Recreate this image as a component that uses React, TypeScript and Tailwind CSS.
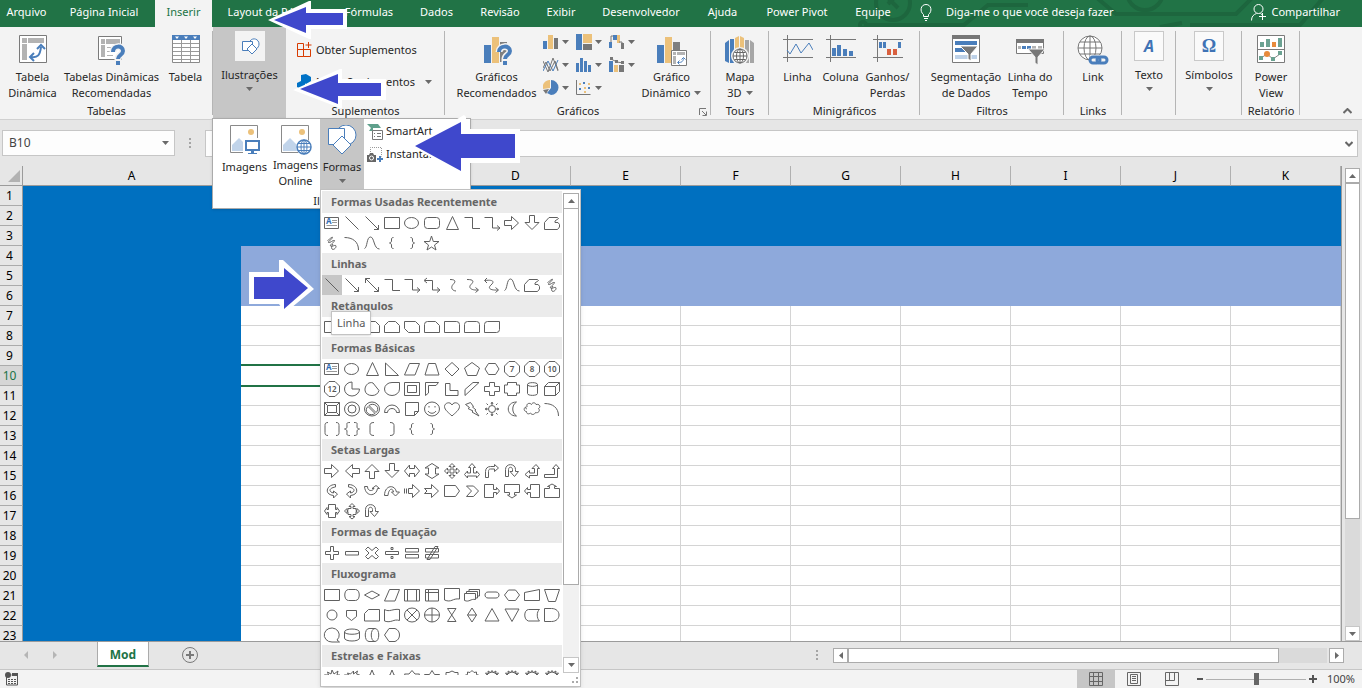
import type { ReactNode } from 'react'

const BLUE = '#4a7ebb'
const GOLD = '#ecc17a'
const GRAY = '#777'

/* ---------- shape gallery ---------- */

// every outline lives in a 20x20 cell
const SHAPES: Record<string, string> = {
  line: 'M3.5 3.5L16.5 16.5',
  lineArrow: 'M3.5 3.5L16.5 16.5M16.5 12v4.5h-4.5',
  lineDouble: 'M3.5 3.5L16.5 16.5M16.5 12v4.5h-4.5M3.5 8v-4.5h4.5',
  rect: 'M2.5 4.5h15v11h-15z',
  ellipse: 'M2.5 10a7 5.5 0 1 0 14 0a7 5.5 0 1 0-14 0z',
  roundRect: 'M5.5 4.5h9a3 3 0 0 1 3 3v5a3 3 0 0 1-3 3h-9a3 3 0 0 1-3-3v-5a3 3 0 0 1 3-3z',
  triangle: 'M10.5 3.5L16.5 16.5H4.5z',
  elbow: 'M2.5 4.5h8v11h7.5',
  elbowArrow: 'M2.5 4.5h8v10.5h7M15 12.5l3 2.5-3 2.5',
  elbowDouble: 'M3 5.5h7.5v9.5h7M15 12.5l3 2.5-3 2.5M5 3l-3 2.5 3 2.5',
  arrowR: 'M2.5 7.5h7v-4l7 6.5-7 6.5v-4h-7z',
  arrowL: 'M17.5 7.5h-7v-4l-7 6.5 7 6.5v-4h7z',
  arrowU: 'M7.5 17.5v-7h-4.5l7-7 7 7h-4.5v7z',
  arrowD: 'M7.5 2.5v7h-4.5l7 7 7-7h-4.5v-7z',
  freeform: 'M2.500 16.500V9.500l4.500-5h8.500l1 1-3.500 2.500v1.500h3l1.500 2v2.500l-2 2.500z',
  scribble: 'M5.500 7.500c2-1 5-4.500 5-3s-5 4-4 5 5-3 6-2-5 4-4 5.500 5-2 5.500 0-3 4.500-4 3 0-4 1-5',
  arc: 'M2.500 4.500c8 0 14 4 14 12.500',
  curve: 'M2.500 15.500c3-1 2-11.500 6-11.500s3 12 9 12',
  curveConn: 'M8 4.500c7 0 5 3 3 5s-2 6 3 6.500',
  curveArrow: 'M5 4.500c7 0 7 2 4 5s0 6 7 5.500M13.500 12.500l3 2.500-3 2.500',
  curveDouble: 'M3 5.500c8-1 10 1 6 4.500s0 5.500 7 5M13.500 12.500l3 2.500-3 2.500M5 3l-2.500 2.500 2.500 2.500',
  braceL: 'M11.500 4.500c-2 0-2 1-2 2.500s0 2.500-2 3c2 .5 2 1.500 2 3s0 2.500 2 2.500',
  braceR: 'M8.500 4.500c2 0 2 1 2 2.500s0 2.500 2 3c-2 .5-2 1.500-2 3s0 2.500-2 2.500',
  star5: 'M9.500 3l1.800 5.500h5.700l-4.500 3.500 1.500 5-4.500-3-4.500 3 1.500-5-4.500-3.500h5.700z',
  snip1: 'M2.500 4.500h11l4 4v7h-15z',
  snip2: 'M6.500 4.500h7l4 4v7h-15v-7z',
  snipDiag: 'M2.500 4.500h11l4 4v7h-11l-4-4z',
  snipRound: 'M5.500 4.500h8l4 4v7h-15v-8a3 3 0 0 1 3-3z',
  round1: 'M2.500 4.500h12a3 3 0 0 1 3 3v8h-15z',
  round2: 'M5.500 4.500h9a3 3 0 0 1 3 3v8h-15v-8a3 3 0 0 1 3-3z',
  roundDiag: 'M5.500 4.500h12v8a3 3 0 0 1-3 3h-12v-8a3 3 0 0 1 3-3z',
  rtTriangle: 'M3.500 4v12.500h13z',
  parallelogram: 'M7.500 4.500h10l-4.500 11.500h-10.500z',
  trapezoid: 'M6.500 4.500h7l3.500 11.500h-14z',
  diamond: 'M10 3.500l7 6.500-7 7-7-7z',
  pentagon: 'M10 3.500l7.500 5.500-3 7.500h-9l-3-7.500z',
  hexagon: 'M6.500 4.500h7l3.500 5.500-3.500 5.500h-7l-3.500-5.500z',
  octagon: 'M7 2.500h6l4.500 4.500v6l-4.500 4.500h-6l-4.500-4.500v-6z',
  pie: 'M10 3a7.500 7 0 1 0 7.500 7h-7.500z',
  chord: 'M6 4.500c-5 4-4 12 4 12c4 0 6-2 7-5l-6-7.500c-2-1-4 0-5 .5z',
  teardrop: 'M17.500 3.500v6.500a7.500 6.500 0 1 1-7.500-6.500z',
  frame: 'M2.500 3.500h15v13h-15zM5.500 6.500h9v7h-9z',
  halfFrame: 'M3.500 3.500h13l-2.500 3h-7.500v7.500l-3 2.500z',
  corner: 'M3.500 4.500h4.500v7h8v5h-12.500z',
  stripe: 'M11 3.500h6l-14 13v-6z',
  cross: 'M7.500 3.500h5v4h5v5h-5v4h-5v-4h-5v-5h5z',
  plaque: 'M5.500 3.500h9v2.500h3v8h-3v2.500h-9v-2.500h-3v-8h3z',
  can: 'M5.500 5.500c0-2.500 10-2.500 10 0v9c0 2.500-10 2.500-10 0zM5.500 5.500c0 2.500 10 2.500 10 0',
  cube: 'M2.500 7.500l4-4h11v9l-4 4h-11zM2.500 7.500h11v9M13.500 7.500l4-4',
  bevel: 'M2.500 3.500h15v13h-15zM5.500 6.500h9v7h-9zM2.500 3.500l3 3M17.500 3.500l-3 3M2.500 16.500l3-3M17.500 16.500l-3-3',
  donut: 'M2.500 10a7.500 7 0 1 0 15 0a7.500 7 0 1 0-15 0zM6 10a4 4 0 1 0 8 0a4 4 0 1 0-8 0z',
  noSymbol: 'M2.500 10a7.500 7 0 1 0 15 0a7.500 7 0 1 0-15 0zM7 6.500a5 4.500 0 0 1 7 7zM6 7.500a5 4.500 0 0 0 7 7z',
  blockArc: 'M2.500 13.500a7.500 7.500 0 0 1 15 0h-3a4.500 4 0 0 0-9 0z',
  folded: 'M3.500 3.500h13v9l-4 4h-9zM16.500 12.500h-4v4',
  smiley: 'M2.500 10a7.500 7 0 1 0 15 0a7.500 7 0 1 0-15 0zM7 7v1.500M13 7v1.500M6 12c2 3 6 3 8 0',
  heart: 'M10 17c-3-3-7.500-6-7.500-9.500s5.500-5.500 7.500-1.500c2-4 7.500-2 7.500 1.500s-4.500 6.500-7.500 9.500z',
  bolt: 'M3.500 5.500l5-2 3 4-1 .5 3.500 3-1 .5 4 5.500-7-4 1-1-5-2.500 1.500-1z',
  sun: 'M6.500 10a3.500 3.500 0 1 0 7 0a3.500 3.500 0 1 0-7 0zM9 5l1-2 1 2zM9 15l1 2 1-2zM5 9l-2 1 2 1zM15 9l2 1-2 1zM4.500 4.500l1.500 1.500M15.500 4.500l-1.500 1.500M4.500 15.500l1.500-1.500M15.500 15.500l-1.500-1.500',
  moon: 'M14.500 3c-11 0-11 14 0 14c-5-3-5-11 0-14z',
  cloud: 'M5 8c-1-4 3-4.500 4.500-2.500c1-2.500 4-2 4.500 0c4-1 5 3 2.500 4c2 2 0 5-3 4c-1 2.500-4 2.500-5 .5c-2 1.500-4 1-4-1.500c-3 0-3-4-.5-4.500c-.5 1 0 2 1 2',
  bracketPair: 'M6 3.500c-2.500 0-3 1-3 3v7c0 2 .5 3 3 3M14 3.500c2.500 0 3 1 3 3v7c0 2-.5 3-3 3',
  bracePair: 'M8 3.500c-4 0-3 1-3 3.500s-.5 2.500-2.500 3c2 .5 2.500 1 2.500 3s-1 3.500 3 3.500M12 3.500c4 0 3 1 3 3.500s.5 2.500 2.500 3c-2 .5-2.500 1-2.500 3s1 3.500-3 3.500',
  bracketL: 'M12 3.500c-3 0-4 1-4 3v7c0 2 1 3 4 3',
  bracketR: 'M8 3.500c3 0 4 1 4 3v7c0 2-1 3-4 3',
  leftRight: 'M2.500 10l5-6v3.500h5v-3.500l5 6-5 6v-3.500h-5v3.500z',
  upDown: 'M10 2.500l7 4.500h-3.500v6h3.500l-7 4.500-7-4.500h3.500v-6h-3.500z',
  quad: 'M10 2.500l3 3h-2v3.500h3.500v-2l3 3-3 3v-2h-3.500v3.500h2l-3 3-3-3h2v-3.500h-3.500v2l-3-3 3-3v2h3.500v-3.500h-2z',
  triArrow: 'M10 2.500l3.500 4h-2v5.500h3v-2l3 3.500-3 3.500v-2h-9v2l-3-3.500 3-3.500v2h3v-5.500h-2z',
  bent: 'M3.500 16.500v-6c0-3 2-5 5-5h4v-2l4 3.500-4 3.500v-2.500h-4c-1.500 0-2 1-2 2.500v6z',
  uturn: 'M3.500 15.500v-7c0-6.500 10-6.500 10 0v2h3l-4 5-4.500-5h2.500v-2c0-3-4-3-4 0v7z',
  leftUp: 'M14 3.500l3.500 4h-2v7h-8v2.500l-4.500-3.500 4.500-4v2.500h5v-4.500h-2.500z',
  bentUp: 'M14 3.500l3.500 4h-2v9h-13v-3h10v-6h-2z',
  curvedR: 'M13.500 3.500c-9 0-12 10-2 11v2.500l4-4-4-3v2c-5-1-5-5 2-6z',
  curvedL: 'M6.500 3.500c9 0 12 10 2 11v2.500l-4-4 4-3v2c5-1 5-5-2-6z',
  curvedU: 'M2.500 5.500h3c0 5 5 5 6.500 2h-2l4-3 3.500 3h-2c-1 8-12 9-13-2z',
  curvedD: 'M2.500 14.500c0-10 10-12 12-3.500h3l-4 4-4-4h2c-1-5-5-3-5.500 3.500z',
  striped: 'M2.500 7.500v5M4.500 7.500v5M6.500 7.500h4v-4l7 6.500-7 6.500v-4h-4z',
  notched: 'M2.500 7.500h7v-4l7 6.500-7 6.500v-4h-7l2.500-2.500z',
  homePlate: 'M2.500 4.500h11l4 5.500-4 5.500h-11z',
  chevron: 'M4.500 5h7l5 5-5 5.500h-7l5-5.500z',
  rightCall: 'M2.500 3.500h9v5h3v-2l3 3.500-3 3.500v-2h-3v5h-9z',
  downCall: 'M2.500 3.500h15v8h-5v2.500h2l-4.500 3-4.500-3h2v-2.500h-5z',
  leftCall: 'M17.500 3.500h-9v5h-3v-2l-3 3.500 3 3.500v-2h3v5h9z',
  upCall: 'M2.500 16.500h15v-9h-5v-2h2l-4.500-2.500-4.500 2.500h2v2h-5z',
  lrCall: 'M6.500 3.500h7v5h1.500v-2l2.500 3.500-2.500 3.500v-2h-1.500v5h-7v-5h-1.500v2l-2.500-3.500 2.500-3.500v2h1.500z',
  quadCall: 'M10 2.500l3 3h-2v2h3v2h1v-2l2.500 2.500-2.500 2.500v-2h-1v3h-3v2h2l-3 2.500-3-2.500h2v-2h-3v-3h-1v2l-2.500-2.500 2.500-2.500v2h1v-2h3v-2h-2z',
  plus: 'M8.500 3.500h3v5h5v3h-5v5h-3v-5h-5v-3h5z',
  minus: 'M3.500 8.500h13v3.500h-13z',
  multiply: 'M6 4l4 3.500 4-3.500 2.500 2.500-3.500 3.500 3.500 3.500-2.500 2.500-4-3.500-4 3.500-2.500-2.500 3.500-3.500-3.500-3.500z',
  divide: 'M3.500 8.500h13v3h-13zM9 4.500h2v2h-2zM9 13.500h2v2h-2z',
  equal: 'M3.500 5.500h13v3.500h-13zM3.500 11.500h13v3.500h-13z',
  notEqual: 'M3.500 5.500h13v3.500h-13zM3.500 11.500h13v3.500h-13zM5 16.500l8-13h3l-8 13z',
  flatDiamond: 'M10 6l7.500 4-7.500 4-7.500-4z',
  altProcess: 'M6.500 4.500h7c5 0 5 11 0 11h-7c-5 0-5-11 0-11z',
  predefined: 'M2.500 4.500h15v11.500h-15zM5.500 4.500v11.500M14.500 4.500v11.500',
  internal: 'M3.500 4.500h13v11.500h-13zM6.500 4.500v11.500M3.500 7.500h13',
  document: 'M2.500 3.500h15v10.500c-7-1-8 4-15 1z',
  multiDoc: 'M2.500 8.500h11v6c-5-1-6 3-11 1zM4.500 8.500v-2h11v6.500h-2M7 6.500v-2h10.500v6.500h-2',
  terminator: 'M6 7h8c4 0 4 6 0 6h-8c-4 0-4-6 0-6z',
  prep: 'M6.500 5h7l4 5-4 5.500h-7l-4-5.500z',
  manualInput: 'M2.500 7.500l15-3v11h-15z',
  manualOp: 'M2.500 4.500h15l-4 12h-7z',
  circle: 'M5 10a5 5 0 1 0 10 0a5 5 0 1 0-10 0z',
  offPage: 'M4.500 5.500h10v6l-5 4-5-4z',
  card: 'M6.500 4.500h11v11.500h-15v-7.500z',
  tape: 'M2.500 4.500c5 3 8-1 15 0v11c-6-2-8 3-15 .5z',
  sumJunction: 'M2.500 10a7.500 7 0 1 0 15 0a7.500 7 0 1 0-15 0zM5 5l10 10M15 5l-10 10',
  or: 'M2.500 10a7.500 7 0 1 0 15 0a7.500 7 0 1 0-15 0zM10 3v14M2.500 10h15',
  collate: 'M5.500 3.500h8.500l-8.500 13h8.500z',
  sort: 'M10 3l4.500 7-4.500 7-4.500-7zM5.500 10h9',
  extract: 'M10 3.500l7 12.500h-14z',
  merge: 'M3 4h14l-7 12.500z',
  stored: 'M6.500 4.500h11c-3 2-3 9 0 11.500h-11c-5-1-5-11 0-11.500z',
  delay: 'M2.500 3.500h7c10 0 10 13 0 13h-7z',
  sequential: 'M10 17a7.500 7 0 1 1 5-2l2.500 2h-7.500z',
  disk: 'M2.500 7c0-4 15-4 15 0v6c0 4-15 4-15 0zM2.500 7c0 3 15 3 15 0',
  direct: 'M7 3.500h6c5 0 5 13 0 13h-6c-5 0-5-13 0-13M13 3.500c-5 0-5 13 0 13',
  display: 'M7 3.500h6c6 2 6 11 0 13h-6l-4.500-6.500z',
  burst1: 'M2.500 8h4l-1-3 3.500 2 1-4 2 4 4-3-1 4h3l-4 4z',
  burst2: 'M2.500 8h4l-1-2 3 1 3-3 0 3 4-3-1 3 3 1-6 4z',
  star4: 'M10 3l2 5 5 2-5 2-2 5-2-5-5-2 5-2z',
  star6: 'M10 3.500l3 3.500h4.500l-2 3.500 2 3.500h-5l-2.500 3.500-2.500-3.500h-5l2-3.500-2-3.500h4.500z',
  starFive: 'M10 3.500l2.500 4h5l-4 3 1.500 5-5-3-5 3 1.500-5-4-3h5z',
  star8: 'M4 8v-2.500h3l3-1.500 3 1.500h3v2.500l1.500 2h-15z',
  star10: 'M2.500 8.500l3-1v-2.500l2.500.5 2-2 2 2 2.500-.5v2.500l3 1-2 3h-11z',
  starMany: 'M2.500 9l2.500-1-1.500-2 3 .5-.5-2.500 2.500 1.500 1.500-2 1.500 2 2.500-1.500-.5 2.500 3-.5-1.500 2 2.500 1-2 2h-11zM5 8l2-2 3-1 3 1 2 2',
}

// these carry their side count inside
const SIDES: Record<string, string> = { sides7: '7', sides8: '8', sides10: '10', sides12: '12' }

const SECTIONS: { title: string; rows: string[] }[] = [
  {
    title: 'Formas Usadas Recentemente',
    rows: [
      'textBox line lineArrow rect ellipse roundRect triangle elbow elbowArrow arrowR arrowD freeform',
      'scribble arc curve braceL braceR star5',
    ],
  },
  {
    title: 'Linhas',
    rows: ['line lineArrow lineDouble elbow elbowArrow elbowDouble curveConn curveArrow curveDouble curve freeform scribble'],
  },
  { title: 'Retângulos', rows: ['rect roundRect snip1 snip2 snipDiag snipRound round1 round2 roundDiag'] },
  {
    title: 'Formas Básicas',
    rows: [
      'textBox ellipse triangle rtTriangle parallelogram trapezoid diamond pentagon hexagon sides7 sides8 sides10',
      'sides12 pie chord teardrop frame halfFrame corner stripe cross plaque can cube',
      'bevel donut noSymbol blockArc folded smiley heart bolt sun moon cloud arc',
      'bracketPair bracePair bracketL bracketR braceL braceR',
    ],
  },
  {
    title: 'Setas Largas',
    rows: [
      'arrowR arrowL arrowU arrowD leftRight upDown quad triArrow bent uturn leftUp bentUp',
      'curvedR curvedL curvedU curvedD striped notched homePlate chevron rightCall downCall leftCall upCall',
      'lrCall quadCall uturn',
    ],
  },
  { title: 'Formas de Equação', rows: ['plus minus multiply divide equal notEqual'] },
  {
    title: 'Fluxograma',
    rows: [
      'rect altProcess flatDiamond parallelogram predefined internal document multiDoc terminator prep manualInput manualOp',
      'circle offPage card tape sumJunction or collate sort extract merge stored delay',
      'sequential disk direct display',
    ],
  },
  {
    title: 'Estrelas e Faixas',
    rows: ['burst1 burst2 star4 star4 star6 starFive star8 star10 starMany starMany starMany starMany'],
  },
]

function Shape({ name }: { name: string }) {
  if (name === 'textBox') {
    return (
      <svg viewBox="0 0 20 20" className="size-5" fill="none" stroke="#666">
        <path d="M2.500 4.500h14v11h-14z" />
        <path d="M10 7.500h5M10 9.500h5M4.500 12.500h10.500" stroke="#999" />
        <text x="4" y="11" fontSize="8" fontWeight="700" fill="#2f6db5" stroke="none">A</text>
      </svg>
    )
  }
  const sides = SIDES[name]
  return (
    <svg viewBox="0 0 20 20" className="size-5" fill="none" stroke="#606060">
      <path d={sides ? SHAPES.octagon : SHAPES[name]} />
      {sides && (
        <text x="10" y="13" fontSize="8" fontWeight="600" textAnchor="middle" fill="#555" stroke="none">
          {sides}
        </text>
      )}
    </svg>
  )
}

function Caret({ up = false }: { up?: boolean }) {
  return (
    <svg viewBox="0 0 7 4" className="w-[7px] h-1 shrink-0" fill="#6a6a6a">
      <path d={up ? 'M0 4h7L3.500 0z' : 'M0 0h7L3.500 4z'} />
    </svg>
  )
}

function ShapeGallery() {
  return (
    <div className="absolute left-0 top-full z-30 w-[261px] h-[498px] bg-white border border-[#c0c0c0] shadow-md flex flex-col p-px">
      <div className="flex h-[484px]">
        <div className="w-60 overflow-hidden">
          {SECTIONS.map(s => (
            <section key={s.title}>
              <h3 className="h-[22px] pl-[9px] bg-[#ebebeb] text-[#666] font-bold leading-[22px]">{s.title}</h3>
              {s.rows.map((row, r) => (
                <div key={r} className="flex h-5">
                  {row.split(' ').map((name, i) => (
                    <button
                      key={i}
                      aria-label={name}
                      className={s.title === 'Linhas' && i === 0 ? 'size-5 bg-[#c6c6c6]' : 'size-5'}
                    >
                      <Shape name={name} />
                    </button>
                  ))}
                </div>
              ))}
            </section>
          ))}
        </div>
        {/* gallery scrollbar */}
        <div className="ml-px mt-0.5 w-4 flex flex-col h-[480px] bg-[#f1f1f1]">
          <button aria-label="Rolar para cima" className="h-4 shrink-0 bg-white border border-[#ababab] flex items-center justify-center">
            <Caret up />
          </button>
          <div className="h-[376px] bg-white border border-t-0 border-[#ababab]" />
          <div className="flex-1" />
          <button aria-label="Rolar para baixo" className="h-4 shrink-0 bg-white border border-[#c6c6c6] flex items-center justify-center">
            <Caret />
          </button>
        </div>
      </div>
      <svg viewBox="0 0 8 8" className="size-2 self-end mt-0.5" fill="#aaa">
        <path d="M5 0h2v2H5zM1 4h2v2H1zM5 4h2v2H5z" />
      </svg>
      <div className="absolute left-[10px] top-[121px] h-6 px-[5px] bg-white border border-[#c3c3c3] shadow text-[#575757] leading-[22px]">
        Linha
      </div>
    </div>
  )
}

/* ---------- ribbon icons ---------- */

function Icon({ w = 32, h = 32, children }: { w?: number; h?: number; children: ReactNode }) {
  return (
    <svg width={w} height={h} viewBox={`0 0 ${w} ${h}`} fill="none" className="shrink-0">
      {children}
    </svg>
  )
}

const PivotIcon = (
  <Icon>
    <path d="M2.500 .5h27v27h-27z" fill="#fff" stroke="#7a7a7a" />
    <path d="M5 3h5v5h-5zM11 3h16v5h-16zM5 9h5v16h-5z" fill="#b3b3b3" />
    <path d="M14 22c7 1 9-2 10-10" stroke={BLUE} strokeWidth="2" />
    <path d="M20 14l4-4 4 4M17 18l-4 4 4 4" stroke={BLUE} strokeWidth="2" />
  </Icon>
)
const PivotHelpIcon = (
  <Icon>
    <path d="M2.500 1.500h23v23h-23z" fill="#fff" stroke="#7a7a7a" />
    <path d="M5 4h4v5h-4zM10 4h14v5h-14zM5 10h4v12h-4z" fill="#b3b3b3" />
    <path d="M11 12.500h8M11 16.500h6M11 20.500h6" stroke="#b3b3b3" />
    <path d="M17 17c0-7 10-7 10-1c0 4-5 4-5 8v4" stroke="#f3f3f3" strokeWidth="7" />
    <path d="M17 17c0-7 10-7 10-1c0 4-5 4-5 8" stroke={BLUE} strokeWidth="4" />
    <path d="M20 26h4v4h-4z" fill={BLUE} />
  </Icon>
)
const TableIcon = (
  <Icon>
    <path d="M2.500 4.500h27v23h-27z" fill="#fff" stroke="#8a8a8a" />
    <path d="M2 0h28v5h-28z" fill={BLUE} />
    <path d="M5 1.500h4l-2 2.500zM14 1.500h4l-2 2.500zM23 1.500h4l-2 2.500z" fill="#fff" />
    <path d="M11.500 5v22M20.500 5v22M3 8.500h26M3 12.500h26M3 16.500h26M3 20.500h26M3 24.500h26" stroke="#9a9a9a" />
  </Icon>
)
const ShapesIcon = (
  <Icon w={20} h={20}>
    <path d="M10 5c3-4 9-2 9 3c0 2-1 4-3 5" stroke={BLUE} fill="#fff" />
    <path d="M2.500 5.500h10v9h-10z" stroke={BLUE} fill="#fff" />
    <path d="M12 8l5 5-5 5-5-5z" stroke={BLUE} fill="#fff" />
  </Icon>
)
const ChartHelpIcon = (
  <Icon>
    <path d="M3 10h7v18H3z" fill={BLUE} />
    <path d="M11 2h7v26h-7z" fill={GOLD} />
    <path d="M19 7h7v20h-7z" fill="#7f7f7f" />
    <path d="M18 17c0-7 11-7 11-1c0 4-5 4-5 8v4" stroke="#f3f3f3" strokeWidth="7" />
    <path d="M18 17c0-7 11-7 11-1c0 4-5 4-5 8" stroke={BLUE} strokeWidth="4" />
    <path d="M22 26h4v4h-4z" fill={BLUE} />
  </Icon>
)
const PivotChartIcon = (
  <Icon>
    <path d="M1 10h7v18H1z" fill={BLUE} />
    <path d="M9 2h7v26h-7z" fill={GOLD} />
    <path d="M17 7h7v10h-7z" fill="#7f7f7f" />
    <path d="M15.500 15.500h15v15h-15z" fill="#fff" stroke="#7a7a7a" />
    <path d="M17 17h3v3h-3zM21 17h8v3h-8zM17 21h3v8h-3z" fill="#b3b3b3" />
    <path d="M22 27.500c4 0 5-1 5.500-4M25.500 24.500l2-2 2 2M23.500 25.500l-2 2 2 2" stroke={BLUE} />
  </Icon>
)
const MapIcon = (
  <Icon>
    <path d="M1 8l4-3v23l-4-2zM6 4h4v24H6z" fill={BLUE} />
    <path d="M11 3l4-2v15h-4zM16 1l4 2v13h-4z" fill={GOLD} />
    <path d="M21 5h4v23h-4zM26 5l4 3v20h-4z" fill="#a6a6a6" />
    <circle cx="16" cy="21" r="9" fill="#f3f3f3" />
    <circle cx="16" cy="21" r="7" fill="#fff" stroke="#666" />
    <path d="M16 14v14M9 21h14M10.500 17.500h11M10.500 24.500h11" stroke="#666" />
    <ellipse cx="16" cy="21" rx="3.500" ry="7" stroke="#666" />
  </Icon>
)
const SPARK_AXIS = 'M0 4.500h30M0 22.500h30M4.500 0v27'
const SparkLineIcon = (
  <Icon w={30}>
    <path d={SPARK_AXIS} stroke={GRAY} />
    <path d="M4 15l3 4 6-10 5 9 8-10 4 7" stroke={BLUE} />
  </Icon>
)
const SparkColIcon = (
  <Icon w={30}>
    <path d={SPARK_AXIS} stroke={GRAY} />
    <path d="M6 13h4v8H6zM11 10h4v11h-4zM17 14h4v7h-4zM23 16h4v5h-4z" fill={BLUE} />
  </Icon>
)
const SparkWinIcon = (
  <Icon w={30}>
    <path d={SPARK_AXIS} stroke={GRAY} />
    <path d="M6 7h3v6H6zM10 7h3v6h-3zM25 7h3v6h-3z" fill={BLUE} />
    <path d="M14 14h4v6h-4zM20 14h4v6h-4z" fill="#d9603f" />
  </Icon>
)
const SlicerIcon = (
  <Icon>
    <path d="M2.500 .5h27v27h-27z" fill="#fff" stroke="#7a7a7a" />
    <path d="M2 0h28v4h-28z" fill={GRAY} />
    <path d="M5 6h22v4H5zM5 13h12v4H5z" fill={BLUE} />
    <path d="M5 20h22v4H5z" fill="#bdd1e8" />
    <path d="M10 11h18l-7 8v7l-3-2v-5z" fill={GRAY} stroke="#fff" />
  </Icon>
)
const TimelineIcon = (
  <Icon>
    <path d="M2.500 4.500h27v14h-27z" fill="#fff" stroke="#7a7a7a" />
    <path d="M2 4h28v4h-28z" fill={GRAY} />
    <path d="M4 11h3v3H4zM18 11h4v3h-4zM24 11h4v3h-4z" fill="#b3b3b3" />
    <path d="M8 11h4v3H8zM13 11h4v3h-4z" fill={BLUE} />
    <path d="M14 14h17l-7 8v8l-3-2v-6z" fill={GRAY} stroke="#f3f3f3" />
  </Icon>
)
const LinkIcon = (
  <Icon>
    <circle cx="13" cy="13" r="12" fill="#fff" stroke={GRAY} />
    <ellipse cx="13" cy="13" rx="6" ry="12" stroke={GRAY} />
    <path d="M13 1v24M1 13h24M3 7h20M3 19h20" stroke={GRAY} />
    <path d="M13 20h19v10h-20z" fill="#f3f3f3" />
    <rect x="13" y="22" width="10" height="6" rx="3" stroke={BLUE} strokeWidth="3" />
    <rect x="20" y="22" width="10" height="6" rx="3" stroke={BLUE} strokeWidth="3" />
  </Icon>
)
const PowerViewIcon = (
  <Icon>
    <path d="M2.500 .5h27v27h-27zM2.500 14.500h27" fill="#fff" stroke="#7a7a7a" />
    <path d="M5 7h4v5H5zM11 4h4v8h-4zM23 3h4v9h-4z" fill="#6ba292" />
    <path d="M17 7h4v5h-4z" fill="#e88b3c" />
    <path d="M6 23l6-4 6 5 7-5" stroke="#888" />
    <path d="M4 21h4v4H4zM16 22h4v4h-4zM23 16h4v4h-4z" fill="#6ba292" />
    <circle cx="12" cy="19" r="3" fill="#e88b3c" />
  </Icon>
)

const CHART_ICONS: { label: string; icon: ReactNode }[] = [
  {
    label: 'Colunas',
    icon: <><path d="M0 7h4v8H0z" fill={BLUE} /><path d="M5 1h5v14H5z" fill={GOLD} /><path d="M11 4h4v11h-4z" fill={GRAY} /></>,
  },
  {
    label: 'Hierarquia',
    icon: <><path d="M0 0h6v16H0z" fill={BLUE} /><path d="M7 0h9v9H7z" fill={GOLD} /><path d="M7 10h9v6H7z" fill={GRAY} /></>,
  },
  {
    label: 'Cascata',
    icon: <><path d="M0 8h3v6H0zM4 1h4v5H4z" fill={BLUE} /><path d="M8 1h3v8H8z" fill={GOLD} /><path d="M12 9h3v6h-3z" fill={GRAY} /><path d="M2 8v-6h2M10 8h3v2" stroke={GRAY} /></>,
  },
  {
    label: 'Linhas',
    icon: <><path d="M0 4l5 11 5-14 5 13" stroke={GRAY} /><path d="M0 14l5-10 5 10 5-11" stroke={BLUE} /><path d="M0 11l3-6 4 9 5-10 3 9" stroke={GRAY} /></>,
  },
  {
    label: 'Estatístico',
    icon: <path d="M0 6h3v9H0zM4 1h3v14H4zM8 4h3v11H8zM12 8h3v7h-3z" fill={BLUE} />,
  },
  {
    label: 'Combinação',
    icon: <><path d="M0 4h4v11H0z" fill={BLUE} /><path d="M5 8h4v7H5z" fill={GOLD} /><path d="M10 8h5v7h-5z" fill={GRAY} /><path d="M2 2l6 3 6 1" stroke={GRAY} /><path d="M1 0h3v3H1zM6 3h3v3H6zM12 4h3v3h-3z" fill={GRAY} /></>,
  },
  {
    label: 'Pizza',
    icon: <><path d="M8 0a7 7 0 0 1 0 15l-4-2 4-5z" fill={BLUE} /><path d="M7 0v8l-7 1a7 7 0 0 1 7-9z" fill={GOLD} /><path d="M0 10l6-1-3 5z" fill={GRAY} /></>,
  },
  {
    label: 'Dispersão',
    icon: <><path d="M.5 0v14.500h14" stroke={GRAY} /><path d="M3 8h2v2H3zM7 2h2v2H7zM12 7h2v2h-2z" fill={BLUE} /><path d="M3 3h2v2H3zM8 7h2v2H8zM12 3h2v2h-2zM8 11h2v2H8z" fill={GOLD} /></>,
  },
]

/* ---------- ribbon ---------- */

const TABS = [
  { label: 'Arquivo', width: 'w-[53px]' },
  { label: 'Página Inicial', width: 'w-[102px]' },
  { label: 'Inserir', width: 'w-[57px]' },
  { label: 'Layout da Página', width: 'w-[120px]' },
  { label: 'Fórmulas', width: 'w-[74px]' },
  { label: 'Dados', width: 'w-[61px]' },
  { label: 'Revisão', width: 'w-[66px]' },
  { label: 'Exibir', width: 'w-[56px]' },
  { label: 'Desenvolvedor', width: 'w-[104px]' },
  { label: 'Ajuda', width: 'w-[59px]' },
  { label: 'Power Pivot', width: 'w-[90px]' },
  { label: 'Equipe', width: 'w-[62px]' },
]

function TabBar() {
  return (
    <header className="relative flex h-[27px] shrink-0 bg-[#217346] text-white overflow-hidden">
      <svg className="absolute left-[850px] top-0" width="512" height="27" fill="none" stroke="#1d663e" strokeWidth="4">
        <circle cx="43" cy="3" r="17" />
        <path d="M36-4l12 12M48-6l-10 10" />
        <circle cx="13" cy="25" r="3" />
        <path d="M16 25h98l24-20h40M240-8l26 22h120l20-20M340 25h110l24-28M310 27l22-4" />
        <circle cx="295" cy="-8" r="18" />
      </svg>
      {TABS.map(t => (
        <button
          key={t.label}
          className={`${t.width} relative shrink-0 whitespace-nowrap pb-0.5 text-center ${
            t.label === 'Inserir' ? 'bg-[#f3f3f3] text-[#217346]' : ''
          }`}
        >
          {t.label}
        </button>
      ))}
      <button className="relative ml-4 flex items-center gap-3.5 whitespace-nowrap pb-0.5">
        <svg width="12" height="17" viewBox="0 0 12 17" fill="none" stroke="#fff">
          <path d="M3.500 12.500v-2c-4-3-3-10 2.500-10s6.500 7 2.500 10v2zM4 14.500h4M5 16.500h2" />
        </svg>
        Diga-me o que você deseja fazer
      </button>
      <button className="relative ml-auto mr-[22px] flex items-center gap-1 whitespace-nowrap pb-0.5">
        <svg width="16" height="17" viewBox="0 0 16 17" fill="none" stroke="#fff">
          <circle cx="7.500" cy="5" r="4.500" />
          <path d="M5.500 9.500c-3 1-5 3-5 7M9.500 9.500l2 1.500M11.500 9v7M8 12.500h7" />
        </svg>
        Compartilhar
      </button>
    </header>
  )
}

function Group({ label, width, children }: { label?: string; width: string; children: ReactNode }) {
  return (
    <div className={`${width} relative flex h-[91px] shrink-0 flex-col`}>
      <div className="flex flex-1 justify-center">{children}</div>
      {label && <div className="h-[15px] text-center leading-4">{label}</div>}
      <span className="absolute right-0 top-1 h-[84px] w-px bg-[#b5b5b5]" />
    </div>
  )
}

function BigButton({ icon, lines, width, caret }: { icon: ReactNode; lines: string[]; width: string; caret?: boolean }) {
  return (
    <button className={`${width} flex h-[76px] shrink-0 flex-col items-center whitespace-nowrap pt-2 leading-4`}>
      <span className="flex h-[34px] shrink-0">{icon}</span>
      {lines.map((l, i) => (
        <span key={l} className="flex items-center gap-1">
          {l}
          {caret && i === lines.length - 1 && <Caret />}
        </span>
      ))}
    </button>
  )
}

function BoxButton({ icon, label }: { icon: ReactNode; label: string }) {
  return (
    <button className="flex flex-col items-center whitespace-nowrap pt-1 leading-4">
      <span className="mb-1.5 flex size-[30px] items-center justify-center border border-[#c9c9c9] bg-[#fafafa]">{icon}</span>
      {label}
      <span className="mt-1"><Caret /></span>
    </button>
  )
}

const PictureBase = (
  <>
    <path d="M1.500 .5h27v27h-27z" fill="#fff" stroke="#8a8a8a" />
    <path d="M3 26v-6l7-7 10 10v3z" fill="#c1d4ea" />
    <circle cx="22" cy="7" r="3" fill={GOLD} />
  </>
)

function IllustrationsPopup() {
  return (
    <div className="absolute -left-px top-full z-20 flex h-[91px] w-[259px] flex-col border border-[#ababab] bg-white shadow">
      <div className="flex h-[70px] pl-[5px]">
        <button className="flex w-[53px] flex-col items-center whitespace-nowrap pt-1.5 leading-4">
          <span className="h-[34px]">
            <Icon>
              {PictureBase}
              <path d="M14 13h18v18h-18z" fill="#fff" />
              <path d="M17 16h13v9h-13z" stroke={BLUE} strokeWidth="2" fill="#fff" />
              <path d="M22 26h3v2h3v1h-9v-1h3z" fill={BLUE} />
            </Icon>
          </span>
          Imagens
        </button>
        <button className="flex w-[49px] flex-col items-center whitespace-nowrap pt-1.5 leading-4">
          <span className="h-[34px]">
            <Icon>
              {PictureBase}
              <circle cx="24" cy="22" r="8" fill="#fff" />
              <circle cx="24" cy="22" r="7" fill="#fff" stroke={BLUE} strokeWidth="1.500" />
              <ellipse cx="24" cy="22" rx="3" ry="7" stroke={BLUE} />
              <path d="M24 15v14M17 22h14M18 18.500h12M18 25.500h12" stroke={BLUE} />
            </Icon>
          </span>
          <span>Imagens</span>
          <span>Online</span>
        </button>
        <div className="relative">
          <button className="flex h-[70px] w-11 flex-col items-center whitespace-nowrap bg-[#c6c6c6] pt-1.5 leading-4">
            <span className="h-[34px]">
              <Icon>
                <circle cx="20" cy="10" r="10" fill="#fff" stroke={BLUE} />
                <path d="M2.500 3.500h16v16h-16z" fill="#fff" stroke={BLUE} />
                <path d="M16 11l9 9-9 9-9-9z" fill="#fff" stroke={BLUE} />
              </Icon>
            </span>
            Formas
            <span className="mt-1"><Caret /></span>
          </button>
          <ShapeGallery />
        </div>
        <div className="flex flex-col pl-[3px] pt-px">
          <button className="flex h-[23px] items-center gap-[3px]">
            <Icon w={16} h={16}>
              <path d="M0 0h11l3 4h-8v3h-4l2-3z" fill="#5fa08c" />
              <path d="M5.500 6.500h10v9h-10z" fill="#fff" stroke="#777" />
              <path d="M7 9.500h1M10 9.500h4M7 12.500h1M10 12.500h4" stroke="#777" />
            </Icon>
            SmartArt
          </button>
          <button className="flex h-[23px] items-center gap-[3px]">
            <Icon w={16} h={16}>
              <path d="M3.500 5v-4.500h11v9" stroke="#999" strokeDasharray="1 1" />
              <path d="M0 8h2l1-2h3l1 2h2v7H0z" fill="#666" />
              <circle cx="4.500" cy="11" r="2" stroke="#fff" />
              <path d="M13 9v6M10 12h6" stroke={BLUE} strokeWidth="2" />
            </Icon>
            Instantâneo
          </button>
        </div>
      </div>
      <div className="pt-1 text-center leading-4">Ilustrações</div>
    </div>
  )
}

function Ribbon() {
  return (
    <div className="relative flex h-[93px] shrink-0 border-b border-[#d0d0d0] bg-[#f3f3f3]">
      <Group label="Tabelas" width="w-[213px]">
        <BigButton icon={PivotIcon} lines={['Tabela', 'Dinâmica']} width="w-[60px]" />
        <BigButton icon={PivotHelpIcon} lines={['Tabelas Dinâmicas', 'Recomendadas']} width="w-[98px]" />
        <BigButton icon={TableIcon} lines={['Tabela']} width="w-[50px]" />
      </Group>
      <div className="relative h-[91px] w-[73px] shrink-0 bg-[#c6c6c6]">
        <button className="flex w-full flex-col items-center pt-1 leading-4">
          <span className="mb-1.5 flex size-[30px] items-center justify-center bg-[#f3f3f3]">{ShapesIcon}</span>
          Ilustrações
          <span className="mt-1"><Caret /></span>
        </button>
        <IllustrationsPopup />
      </div>
      <Group label="Suplementos" width="w-[159px]">
        <div className="flex w-full flex-col gap-4 whitespace-nowrap pl-[10px] pt-[15px] leading-4">
          <button className="flex items-center gap-1">
            <Icon w={16} h={16}>
              <path d="M1.500 1.500h6v6h-6zM1.500 7.500h6v7h-6zM7.500 7.500h7v7h-7zM12.500 0v6M9.500 3h6" stroke="#d83b01" />
            </Icon>
            Obter Suplementos
          </button>
          <button className="flex items-center gap-1">
            <Icon w={16} h={16}>
              <path d="M5 1l5-1 5 3v4l-5 3-5-3zM1 9l4-2 4 2v4l-4 2-4-2z" fill="#0072c6" />
            </Icon>
            Meus Suplementos
            <span className="ml-1.5"><Caret /></span>
          </button>
        </div>
      </Group>
      <Group label="Gráficos" width="w-[266px]">
        <BigButton icon={ChartHelpIcon} lines={['Gráficos', 'Recomendados']} width="w-[84px]" />
        <div className="ml-1 grid w-[99px] shrink-0 grid-cols-3 content-start pt-[3px]">
          {CHART_ICONS.map(c => (
            <button key={c.label} aria-label={c.label} className="flex h-[23px] items-center gap-[3px]">
              <Icon w={16} h={16}>{c.icon}</Icon>
              <Caret />
            </button>
          ))}
        </div>
        <BigButton icon={PivotChartIcon} lines={['Gráfico', 'Dinâmico']} width="w-[60px]" caret />
        <svg className="absolute bottom-0.5 right-1" width="8" height="8" fill="none" stroke="#777">
          <path d="M.5 7V.5H7M3 3l4 4M7.500 3.500v4h-4" />
        </svg>
      </Group>
      <Group label="Tours" width="w-[58px]">
        <BigButton icon={MapIcon} lines={['Mapa', '3D']} width="w-14" caret />
      </Group>
      <Group label="Minigráficos" width="w-[151px]">
        <BigButton icon={SparkLineIcon} lines={['Linha']} width="w-[42px]" />
        <BigButton icon={SparkColIcon} lines={['Coluna']} width="w-[44px]" />
        <BigButton icon={SparkWinIcon} lines={['Ganhos/', 'Perdas']} width="w-[50px]" />
      </Group>
      <Group label="Filtros" width="w-[144px]">
        <BigButton icon={SlicerIcon} lines={['Segmentação', 'de Dados']} width="w-[76px]" />
        <BigButton icon={TimelineIcon} lines={['Linha do', 'Tempo']} width="w-[52px]" />
      </Group>
      <Group label="Links" width="w-[58px]">
        <BigButton icon={LinkIcon} lines={['Link']} width="w-12" />
      </Group>
      <Group width="w-[54px]">
        <BoxButton icon={<span className="text-base font-bold italic text-[#3f73b5]">A</span>} label="Texto" />
      </Group>
      <Group width="w-[66px]">
        <BoxButton icon={<span className="font-['Liberation_Serif',serif] text-lg font-bold text-[#3f73b5]">Ω</span>} label="Símbolos" />
      </Group>
      <Group label="Relatório" width="w-[58px]">
        <BigButton icon={PowerViewIcon} lines={['Power', 'View']} width="w-12" />
      </Group>
      <button aria-label="Recolher faixa" className="ml-auto mr-[10px] self-end pb-[5px]">
        <svg width="9" height="6" viewBox="0 0 9 6" fill="none" stroke="#6a6a6a" strokeWidth="2">
          <path d="M.5 5l4-4 4 4" />
        </svg>
      </button>
    </div>
  )
}

/* ---------- sheet ---------- */

const COLUMNS = ['A', 'B', 'C', 'D', 'E', 'F', 'G', 'H', 'I', 'J', 'K']
const ROWS = Array.from({ length: 23 }, (_, i) => i + 1)

function cellClass(row: number, col: string) {
  if (row <= 3 || col === 'A') return 'bg-[#0070c0]'
  if (row <= 6) return 'bg-[#8ea9db]'
  return 'border-b border-r border-[#d4d4d4] bg-white'
}

function FormulaBar() {
  return (
    <div className="flex h-[46px] shrink-0 items-start pl-0.5 pr-1 pt-[10px] text-xs">
      <div className="flex h-[26px] w-[173px] shrink-0 items-center border border-[#c6c6c6] bg-[#fdfdfd] pr-[5px]">
        <input aria-label="Caixa de nome" defaultValue="B10" className="min-w-0 flex-1 pl-1.5 text-[#444] outline-none" />
        <Caret />
      </div>
      <svg width="30" height="26" viewBox="0 0 30 26" className="shrink-0" fill="#a5a5a5">
        <path d="M14 8h2v2h-2zM14 12h2v2h-2zM14 16h2v2h-2z" />
      </svg>
      <div className="flex h-[27px] flex-1 items-center border border-[#c6c6c6] bg-[#fdfdfd] pr-1">
        <input aria-label="Barra de fórmulas" className="min-w-0 flex-1 pl-2 outline-none" />
        <svg width="8" height="6" viewBox="0 0 8 6" fill="none" stroke="#666" strokeWidth="2">
          <path d="M.5 1l3.500 3.500L7.500 1" />
        </svg>
      </div>
    </div>
  )
}

function Sheet() {
  return (
    <div className="flex min-h-0 flex-1">
      <div className="flex-1 overflow-hidden border-r border-[#9b9b9b]">
        <table className="w-full table-fixed border-separate border-spacing-0 text-xs">
          <thead>
            <tr className="h-5">
              <th className="w-[23px] border-b border-r border-[#9b9b9b] p-0">
                <svg width="13" height="13" className="ml-[7px] mt-0.5" fill="#b2b2b2">
                  <path d="M13 0v12H1z" />
                </svg>
              </th>
              {COLUMNS.map(c => (
                <th
                  key={c}
                  className={`border-b border-r border-b-[#9b9b9b] border-r-[#b0b0b0] p-0 font-normal leading-[18px] text-black ${
                    c === 'A' ? 'w-[218px]' : ''
                  }`}
                >
                  {c}
                </th>
              ))}
            </tr>
          </thead>
          <tbody>
            {ROWS.map(r => (
              <tr key={r} className="h-5">
                <th
                  className={`border-b border-r border-b-[#ababab] border-r-[#9b9b9b] p-0 pr-[3px] pt-px font-normal leading-[18px] ${
                    r === 10 ? 'bg-[#d6d6d6] text-[#217346]' : 'text-black'
                  }`}
                >
                  {r}
                </th>
                {COLUMNS.map(c => (
                  <td key={c} className={`relative p-0 ${cellClass(r, c)}`}>
                    {r === 10 && c === 'B' && (
                      <span className="absolute inset-x-0 -top-0.5 -bottom-0.5 z-10 border-y-2 border-[#217346]" />
                    )}
                  </td>
                ))}
              </tr>
            ))}
          </tbody>
        </table>
      </div>
      <div className="flex w-5 shrink-0 flex-col pb-0 pl-[3px] pr-0.5 pt-0.5">
        <button aria-label="Rolar para cima" className="flex h-[15px] shrink-0 items-center justify-center border border-[#ababab] bg-white">
          <Caret up />
        </button>
        <div className="h-[336px] border border-[#ababab] bg-white" />
        <div className="flex-1 bg-[#dadada]" />
        <button aria-label="Rolar para baixo" className="flex h-[15px] shrink-0 items-center justify-center border border-[#c6c6c6] bg-white">
          <Caret />
        </button>
      </div>
    </div>
  )
}

function SheetTabs() {
  return (
    <div className="flex h-7 shrink-0 items-start border-t border-[#9b9b9b]">
      <svg width="97" height="27" viewBox="0 0 97 27" fill="#b5b5b5">
        <path d="M28 9v8l-4-4zM53 9v8l4-4z" />
      </svg>
      <button className="h-[25px] w-[52px] border-x border-b-2 border-x-[#ababab] border-b-[#217346] bg-white pt-0.5 text-xs font-bold text-[#217346]">
        Mod
      </button>
      <button aria-label="Nova planilha" className="ml-8 mt-1">
        <svg width="18" height="18" viewBox="0 0 18 18" fill="none" stroke="#7a7a7a">
          <circle cx="9" cy="9" r="7.500" />
          <path d="M9 5v8M5 9h8" strokeWidth="2" />
        </svg>
      </button>
      <div className="ml-auto mr-[18px] mt-1.5 flex h-[15px] items-stretch">
        <svg width="17" height="15" viewBox="0 0 17 15" fill="#a5a5a5">
          <path d="M0 2h2v2H0zM0 6h2v2H0zM0 10h2v2H0z" />
        </svg>
        <button aria-label="Rolar para a esquerda" className="flex w-[15px] items-center justify-center border border-[#ababab] bg-white">
          <svg width="4" height="7" fill="#6a6a6a"><path d="M4 0v7L0 3.500z" /></svg>
        </button>
        <div className="w-[431px] border border-[#ababab] bg-white" />
        <div className="mr-0.5 w-12 bg-[#dadada]" />
        <button aria-label="Rolar para a direita" className="flex w-[15px] items-center justify-center border border-[#ababab] bg-white">
          <svg width="4" height="7" fill="#6a6a6a"><path d="M0 0v7l4-3.500z" /></svg>
        </button>
      </div>
    </div>
  )
}

function StatusBar() {
  return (
    <footer className="flex h-[19px] shrink-0 items-center border-t border-[#c6c6c6] bg-[#f3f3f3] text-[#444]">
      <svg width="14" height="14" viewBox="0 0 14 14" className="ml-[5px]" fill="none">
        <path d="M1.500 5v8h11V3h-6" stroke="#555" />
        <path d="M7 1h6v3H7z" fill="#555" />
        <path d="M3 7.500h9M3 9.500h9M3 11.500h9" stroke="#555" strokeDasharray="2 1" />
        <circle cx="3" cy="3" r="3" fill="#555" />
      </svg>
      <div className="ml-auto flex h-full items-center">
        <button aria-label="Normal" className="flex h-full w-[38px] items-center justify-center bg-[#c6c6c6]">
          <svg width="14" height="14" fill="none" stroke="#666"><path d="M.5 .5h13v13H.5zM.5 4.500h13M.5 9.500h13M4.500 .5v13M9.500 .5v13" /></svg>
        </button>
        <button aria-label="Layout da página" className="flex h-full w-[38px] items-center justify-center">
          <svg width="14" height="14" fill="none" stroke="#666"><path d="M.5 .5h13v13H.5zM3.500 2.500h7v9h-7zM5 4.500h4M5 6.500h4M5 8.500h4" /></svg>
        </button>
        <button aria-label="Quebra de página" className="flex h-full w-[38px] items-center justify-center">
          <svg width="14" height="14" fill="none" stroke="#666"><path d="M.5 .5h13v13H.5zM4.500 .5v8M9.500 .5v8M.5 8.500h9" /></svg>
        </button>
        <button aria-label="Reduzir" className="ml-1.5 h-0.5 w-1.5 bg-[#555]" />
        <input
          type="range"
          aria-label="Zoom"
          className="mx-[3px] h-3 w-[100px] appearance-none bg-[linear-gradient(#b0b0b0,#b0b0b0)] bg-[length:100px_1px] bg-center bg-no-repeat [&::-webkit-slider-thumb]:h-3 [&::-webkit-slider-thumb]:w-[5px] [&::-webkit-slider-thumb]:appearance-none [&::-webkit-slider-thumb]:bg-[#666]"
        />
        <button aria-label="Ampliar">
          <svg width="8" height="8" stroke="#555" strokeWidth="2"><path d="M4 0v8M0 4h8" /></svg>
        </button>
        <span className="w-[45px] pr-[7px] text-right">100%</span>
      </div>
    </footer>
  )
}

const POINTERS = [
  {
    edge: '268,20 309,1 311,1 311,9 347,9 347,29 311,29 311,39 309,39',
    body: '274,20 306,7 306,13 343,13 343,25 306,25 306,33',
  },
  {
    edge: '293,90 340,69 342,69 342,79 386,79 386,100 342,100 342,108 340,108',
    body: '300,89 338,74 338,83 381,83 381,96 338,96 338,104',
  },
  {
    edge: '411,146 464,115 466,117 466,129 520,129 520,163 466,163 466,175 464,176',
    body: '415,146 461,122 461,134 515,134 515,158 461,158 461,171',
  },
  {
    edge: '249,272 279,272 279,260 283,260 314,289 291,308 283,310 279,304 249,304',
    body: '254,277 284,277 284,268 308,288 284,309 284,299 254,299',
  },
]

export default function App() {
  return (
    <div className="relative flex h-screen flex-col overflow-hidden bg-[#e6e6e6] font-['Noto_Sans','Open_Sans',sans-serif] text-[11px] text-[#262626]">
      <TabBar />
      <Ribbon />
      <FormulaBar />
      <Sheet />
      <SheetTabs />
      <StatusBar />
      {/* tutorial pointers over the window */}
      <svg className="pointer-events-none absolute left-0 top-0 z-40" width="560" height="330">
        {POINTERS.map(p => (
          <g key={p.body}>
            <polygon points={p.edge} fill="#fff" />
            <polygon points={p.body} fill="#3f48cc" />
          </g>
        ))}
      </svg>
    </div>
  )
}
